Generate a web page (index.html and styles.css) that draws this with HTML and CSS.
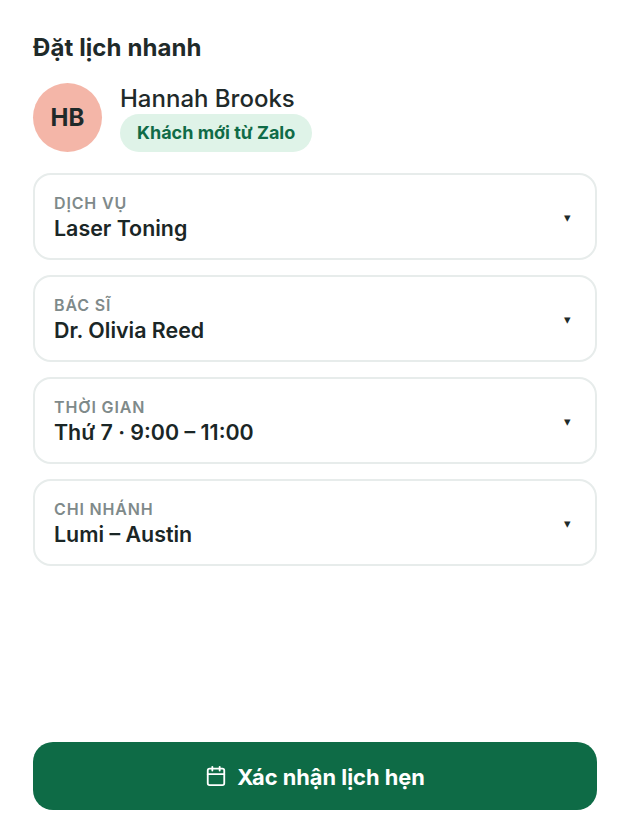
FILE: index.html
```html
<!DOCTYPE html>
<html lang="vi">
<head>
<meta charset="utf-8">
<title>Đặt lịch nhanh</title>
<link rel="stylesheet" href="styles.css">
</head>
<body>
<main class="panel">
  <h1 class="title">Đặt lịch nhanh</h1>
  <section class="customer">
    <div class="avatar">HB</div>
    <div class="customer-info">
      <div class="name">Hannah Brooks</div>
      <span class="tag">Khách mới từ Zalo</span>
    </div>
  </section>
  <section class="fields">
    <div class="field">
      <div class="field-text"><div class="label">DỊCH VỤ</div><div class="value">Laser Toning</div></div>
      <span class="caret">▾</span>
    </div>
    <div class="field">
      <div class="field-text"><div class="label">BÁC SĨ</div><div class="value">Dr. Olivia Reed</div></div>
      <span class="caret">▾</span>
    </div>
    <div class="field">
      <div class="field-text"><div class="label">THỜI GIAN</div><div class="value">Thứ 7 · 9:00 – 11:00</div></div>
      <span class="caret">▾</span>
    </div>
    <div class="field">
      <div class="field-text"><div class="label">CHI NHÁNH</div><div class="value">Lumi – Austin</div></div>
      <span class="caret">▾</span>
    </div>
  </section>
  <button class="confirm" type="button">
    <svg class="confirm-icon" viewBox="0 0 24 24" fill="none" stroke="currentColor" stroke-width="2" stroke-linecap="round" stroke-linejoin="round"><path d="M8 2v4"/><path d="M16 2v4"/><rect x="3" y="4" width="18" height="18" rx="2"/><path d="M3 10h18"/></svg>
    <span class="confirm-text">Xác nhận lịch hẹn</span>
  </button>
</main>
</body>
</html>
```
FILE: styles.css
```css
* { box-sizing: border-box; }
html, body { margin: 0; height: 100%; background: #fff; }
body { font-family: Inter, "Noto Sans", sans-serif; color: #1f2a2a; }
.panel {
  height: 840px;
  padding: 33px 33px 30px;
  display: flex;
  flex-direction: column;
}
.title { margin: 0; font-size: 24px; line-height: 30px; font-weight: 700; letter-spacing: 0.1px; }
.customer { display: flex; align-items: center; gap: 18px; margin-top: 20px; }
.avatar {
  width: 69px; height: 69px; border-radius: 50%;
  background: #f4b6a8;
  display: flex; align-items: center; justify-content: center;
  font-size: 24px; font-weight: 700;
}
.customer-info { display: flex; flex-direction: column; align-items: flex-start; }
.name { font-size: 24px; line-height: 31px; font-weight: 500; }
.tag {
  background: #dff3e8; color: #0f6b47;
  border-radius: 19px; padding: 0 17px;
  font-size: 18px; line-height: 38px; font-weight: 700;
}
.fields { display: flex; flex-direction: column; gap: 15px; margin-top: 21px; }
.field {
  height: 87px;
  border: 2px solid #e7eceb; border-radius: 18px;
  padding: 2px 24px 0 19px;
  display: flex; align-items: center; justify-content: space-between;
}
.label { font-size: 16px; line-height: 20px; font-weight: 600; color: #7f8a8a; letter-spacing: 0.85px; }
.value { font-size: 21.4px; line-height: 30px; font-weight: 600; color: #1a2626; }
.caret { font-size: 13px; margin-top: -2px; color: #1f2a2a; }
.confirm {
  margin-top: auto;
  height: 68px;
  border: 0; border-radius: 20px;
  background: #0e6b46; color: #fff;
  display: flex; align-items: center; justify-content: center; gap: 10px;
  font-family: inherit; font-size: 21.8px; font-weight: 700;
}
.confirm-icon { width: 22px; height: 22px; }
.confirm-text { padding-top: 2px; }
```
